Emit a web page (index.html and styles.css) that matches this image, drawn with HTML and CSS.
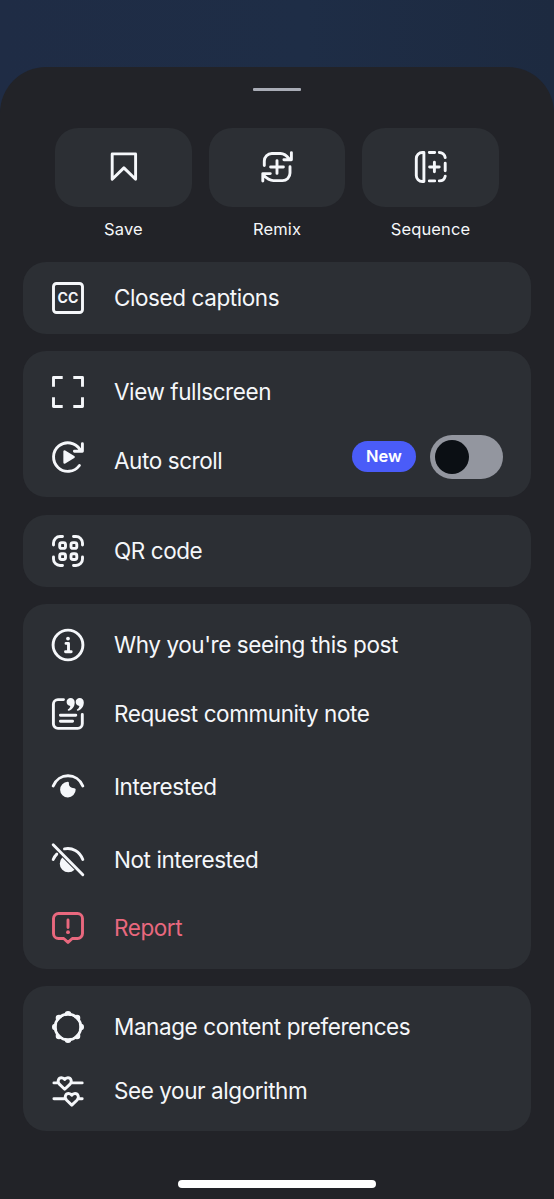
FILE: index.html
```html
<!DOCTYPE html>
<html lang="en">
<head>
<meta charset="utf-8">
<title>Post options</title>
<link rel="stylesheet" href="styles.css">
</head>
<body>
<main class="sheet">
  <div class="handle"></div>
  <div class="actions">
    <div class="action">
      <button class="tile"><svg class="icon" viewBox="0 0 36 36"><path d="M6.200 4.900h23.400v25.400L17.900 18.900 6.200 30.300z"/></svg></button>
      <span class="action-label">Save</span>
    </div>
    <div class="action">
      <button class="tile"><svg class="icon" viewBox="0 0 36 36"><path d="M5.3 16.5v-4.5a7.5 7.5 0 0 1 7.5-7.5h8.7c4 0 6.3 2.2 8.8 5.6M32.4 3.6v7.2h-7.5M31 17.8v6.3a7.5 7.5 0 0 1-7.5 7.5h-9.2c-4 0-6.7-2.2-10.2-5.8M3.8 32v-7.4h7.5M18 11.6v12.8M11.6 18h12.8"/></svg></button>
      <span class="action-label">Remix</span>
    </div>
    <div class="action">
      <button class="tile"><svg class="icon" viewBox="0 0 36 36"><path d="M10.900 3.500v29h-1.600a6 6 0 0 1-6-6v-17a6 6 0 0 1 6-6zM16.300 3.500h5.400M26.300 3.500a6 6 0 0 1 5.900 5M32.200 14.200v7.600M32.200 27.200a6 6 0 0 1-5.900 4.700M21.700 31.900h-5.400M21.400 13.200v9.600M16.600 18h9.600"/></svg></button>
      <span class="action-label">Sequence</span>
    </div>
  </div>

  <section class="card">
    <div class="row row-single">
      <svg class="icon" viewBox="0 0 36 36"><rect x="3.5" y="3.5" width="29" height="29" rx="3"/><text class="cc" x="7.6" y="22.7" textLength="20.800" lengthAdjust="spacingAndGlyphs">CC</text></svg>
      <span class="label">Closed captions</span>
    </div>
  </section>

  <section class="card card-playback">
    <div class="row row-first">
      <svg class="icon square" viewBox="0 0 36 36"><path d="M3.5 12.700V3.500h9.200M23.300 3.500h9.200v9.200M32.500 23.300v9.200h-9.200M12.700 32.500H3.500v-9.200"/></svg>
      <span class="label">View fullscreen</span>
    </div>
    <div class="row row-scroll">
      <svg class="icon" viewBox="0 0 36 36"><path d="M29.400 26.500A14.300 14.300 0 1 1 30 10.500M32.400 4.800v7.400h-8"/><path class="solid" d="M14.600 12.500v11l9-5.500z"/></svg>
      <span class="label label-low">Auto scroll</span>
      <span class="badge">New</span>
      <span class="switch"><span class="knob"></span></span>
    </div>
  </section>

  <section class="card">
    <div class="row row-single">
      <svg class="icon" viewBox="0 0 36 36"><path d="M3.500 12v-2a6.500 6.500 0 0 1 6.500-6.500h2.500M23.500 3.500h2.500a6.500 6.500 0 0 1 6.500 6.500v2M32.500 24v2a6.500 6.500 0 0 1-6.500 6.500h-2.500M12.500 32.500H10a6.500 6.500 0 0 1-6.500-6.500v-2"/><rect x="9.700" y="9.600" width="5.800" height="5.800" rx="2"/><rect x="21" y="9.600" width="5.800" height="5.800" rx="2"/><rect x="9.700" y="20.700" width="5.800" height="5.800" rx="2"/><rect x="21" y="20.700" width="5.800" height="5.800" rx="2"/></svg>
      <span class="label">QR code</span>
    </div>
  </section>

  <section class="card card-feedback">
    <div class="row row-first">
      <svg class="icon" viewBox="0 0 36 36"><circle cx="18" cy="18" r="14.900"/><path d="M16 16.400h2.500v8M15.500 24.700h5.700"/><circle class="dot" cx="18" cy="11.600" r="1.900"/></svg>
      <span class="label">Why you're seeing this post</span>
    </div>
    <div class="row row-note">
      <svg class="icon" viewBox="0 0 36 36"><path d="M13.500 3.600H8a4.600 4.600 0 0 0-4.600 4.600v19.600A4.600 4.600 0 0 0 8 32.400h19.700a4.600 4.600 0 0 0 4.600-4.600V18.500M10.400 19.300h15.400M10.400 25.200h12.200"/><path class="quote" d="M20.600 2.100c-2.300 0-4 1.700-4 3.900s1.600 3.900 3.700 3.900c-.2 1.600-1 2.700-2.200 3.400-.8.500-.2 1.700.7 1.400 3.800-1.300 5.900-4.600 5.900-8.300 0-2.600-1.700-4.300-4.100-4.300zM29.700 2.100c-2.300 0-4 1.700-4 3.900s1.600 3.900 3.700 3.900c-.2 1.600-1 2.700-2.200 3.400-.8.500-.2 1.700.7 1.400 3.800-1.300 5.900-4.600 5.900-8.300 0-2.600-1.700-4.300-4.100-4.300z"/></svg>
      <span class="label">Request community note</span>
    </div>
    <div class="row row-interest">
      <svg class="icon" viewBox="0 0 36 36"><path d="M3.200 17C8.500 3.400 27.500 3.400 32.800 17"/><path class="dot" d="M17.700 12.800q1.300 0 1.200 1.300c-.2 3.300 1.800 4.900 5.400 5.100q1.400.1 1.400 1.400A7.800 7.800 0 1 1 17.700 12.800z"/></svg>
      <span class="label">Interested</span>
    </div>
    <div class="row row-note">
      <svg class="icon" viewBox="0 0 36 36"><path d="M3.200 17.500q1.400-3.300 3.600-5.400M14.500 6.900c7.500-1.600 15.200 2.300 18.300 10.600M3.200 2.700l29.600 30.100"/><path class="dot" d="M12.300 15.600L24.500 27.800A8.300 8.300 0 0 1 12.300 15.600z"/></svg>
      <span class="label">Not interested</span>
    </div>
    <div class="row row-report">
      <svg class="icon" viewBox="0 0 36 36"><path d="M8.500 3.500h19a5 5 0 0 1 5 5v15a5 5 0 0 1-5 5h-5.200L18 32.400l-4.300-3.900H8.500a5 5 0 0 1-5-5v-15a5 5 0 0 1 5-5zM18 10v7.500"/><circle class="dot" cx="18" cy="22.200" r="1.900"/></svg>
      <span class="label">Report</span>
    </div>
  </section>

  <section class="card card-prefs">
    <div class="row row-manage">
      <svg class="icon" viewBox="0 0 36 36"><circle cx="18" cy="18" r="12.800"/><path class="teeth" d="M18 5.300h.01M27 9h.01M30.700 18h.01M27 27h.01M18 30.700h.01M9 27h.01M5.300 18h.01M9 9h.01"/><circle class="hole" cx="18" cy="18" r="11.200"/></svg>
      <span class="label">Manage content preferences</span>
    </div>
    <div class="row row-algorithm">
      <svg class="icon" viewBox="0 0 36 36"><path d="M3.900 9.900H8M22 9.900h10.200M3.900 25.700H14.500M28.500 25.700h3.700M14.700 16.300L9.600 11.400C6.700 8.300 8.600 4.700 11.500 4.700c1.500 0 2.600.8 3.200 1.800.6-1 1.700-1.800 3.200-1.800 2.900 0 4.800 3.600 1.900 6.700zM21.800 32.100l-5.100-4.900c-2.900-3.100-1-6.700 1.900-6.700 1.500 0 2.600.8 3.200 1.800.6-1 1.700-1.800 3.200-1.800 2.900 0 4.800 3.600 1.900 6.700z"/></svg>
      <span class="label">See your algorithm</span>
    </div>
  </section>
  <div class="home-bar"></div>
</main>
</body>
</html>
```
FILE: styles.css
```css
* {
  box-sizing: border-box;
}

body {
  margin: 0;
  padding-top: 67px;
  height: 1199px;
  overflow: hidden;
  background: linear-gradient(90deg, #1f2c45 0%, #1e2d46 55%, #1d2a40 100%);
  color: #f5f7fa;
  font-family: Inter, "Liberation Sans", sans-serif;
}

.sheet {
  display: flex;
  flex-direction: column;
  align-items: center;
  height: 1132px;
  padding: 21px 23px 0;
  border-radius: 46px 46px 0 0;
  background: #222328;
}

.handle {
  width: 48px;
  height: 3px;
  border-radius: 1px;
  background: #a9acb6;
}

.actions {
  display: flex;
  gap: 17px;
  height: 134px;
  margin-top: 36.500px;
}

.action {
  display: flex;
  flex-direction: column;
  align-items: center;
  width: 136.500px;
}

.tile {
  display: flex;
  align-items: center;
  justify-content: center;
  width: 136.500px;
  height: 79.500px;
  padding: 0;
  border: 0;
  border-radius: 23px;
  background: #2c2f34;
  color: inherit;
}

.action-label {
  margin-top: 12px;
  font-size: 16.500px;
  line-height: 20px;
  letter-spacing: 0.15px;
}

.card {
  width: 508px;
  margin-bottom: 17.500px;
  border-radius: 23px;
  background: #2c2f34;
}

.card-playback {
  height: 146px;
  padding-top: 4px;
}

.card-feedback {
  height: 364.500px;
  padding-top: 4.500px;
}

.card-prefs {
  height: 145px;
  padding-top: 0.500px;
}

.row {
  display: flex;
  align-items: center;
  padding: 0 28px 0 27px;
}

.row-single { height: 72px; }
.row-first { height: 73px; }
.row-scroll { height: 57px; }
.row-note { height: 65px; }
.row-interest { height: 81px; }
.row-report { height: 71px; color: #e9687e; }
.row-manage { height: 80px; }
.row-algorithm { height: 48px; }

.icon {
  flex: none;
  width: 36px;
  height: 36px;
  overflow: visible;
  fill: none;
  stroke: currentColor;
  stroke-width: 2.900;
  stroke-linecap: round;
  stroke-linejoin: round;
}

.icon.square { stroke-linecap: butt; }
.icon .solid { fill: currentColor; stroke-width: 2.500; }
.icon .dot, .icon .quote { fill: currentColor; stroke: none; }
.icon .teeth { stroke-width: 6.600; }
.icon .hole { fill: #2c2f34; stroke: none; }

.icon .cc {
  fill: currentColor;
  stroke: none;
  font-size: 14px;
  font-weight: 700;
}

.label {
  margin-left: 28px;
  font-size: 22.500px;
  line-height: 28px;
  letter-spacing: -0.420px;
  white-space: nowrap;
}

.label-low {
  padding-top: 8px;
}

.badge {
  width: 64px;
  height: 31px;
  margin: 0 14px 0 auto;
  border-radius: 16px;
  background: #4a5cf8;
  color: #fff;
  font-size: 16.500px;
  font-weight: 600;
  line-height: 31px;
  text-align: center;
}

.switch {
  width: 73px;
  height: 44px;
  padding: 5px;
  border-radius: 22px;
  background: #93969f;
}

.knob {
  display: block;
  width: 34px;
  height: 34px;
  border-radius: 50%;
  background: #0b0f14;
}

.home-bar {
  width: 198px;
  height: 8px;
  margin-top: 31px;
  border-radius: 4px;
  background: #fff;
}
```
